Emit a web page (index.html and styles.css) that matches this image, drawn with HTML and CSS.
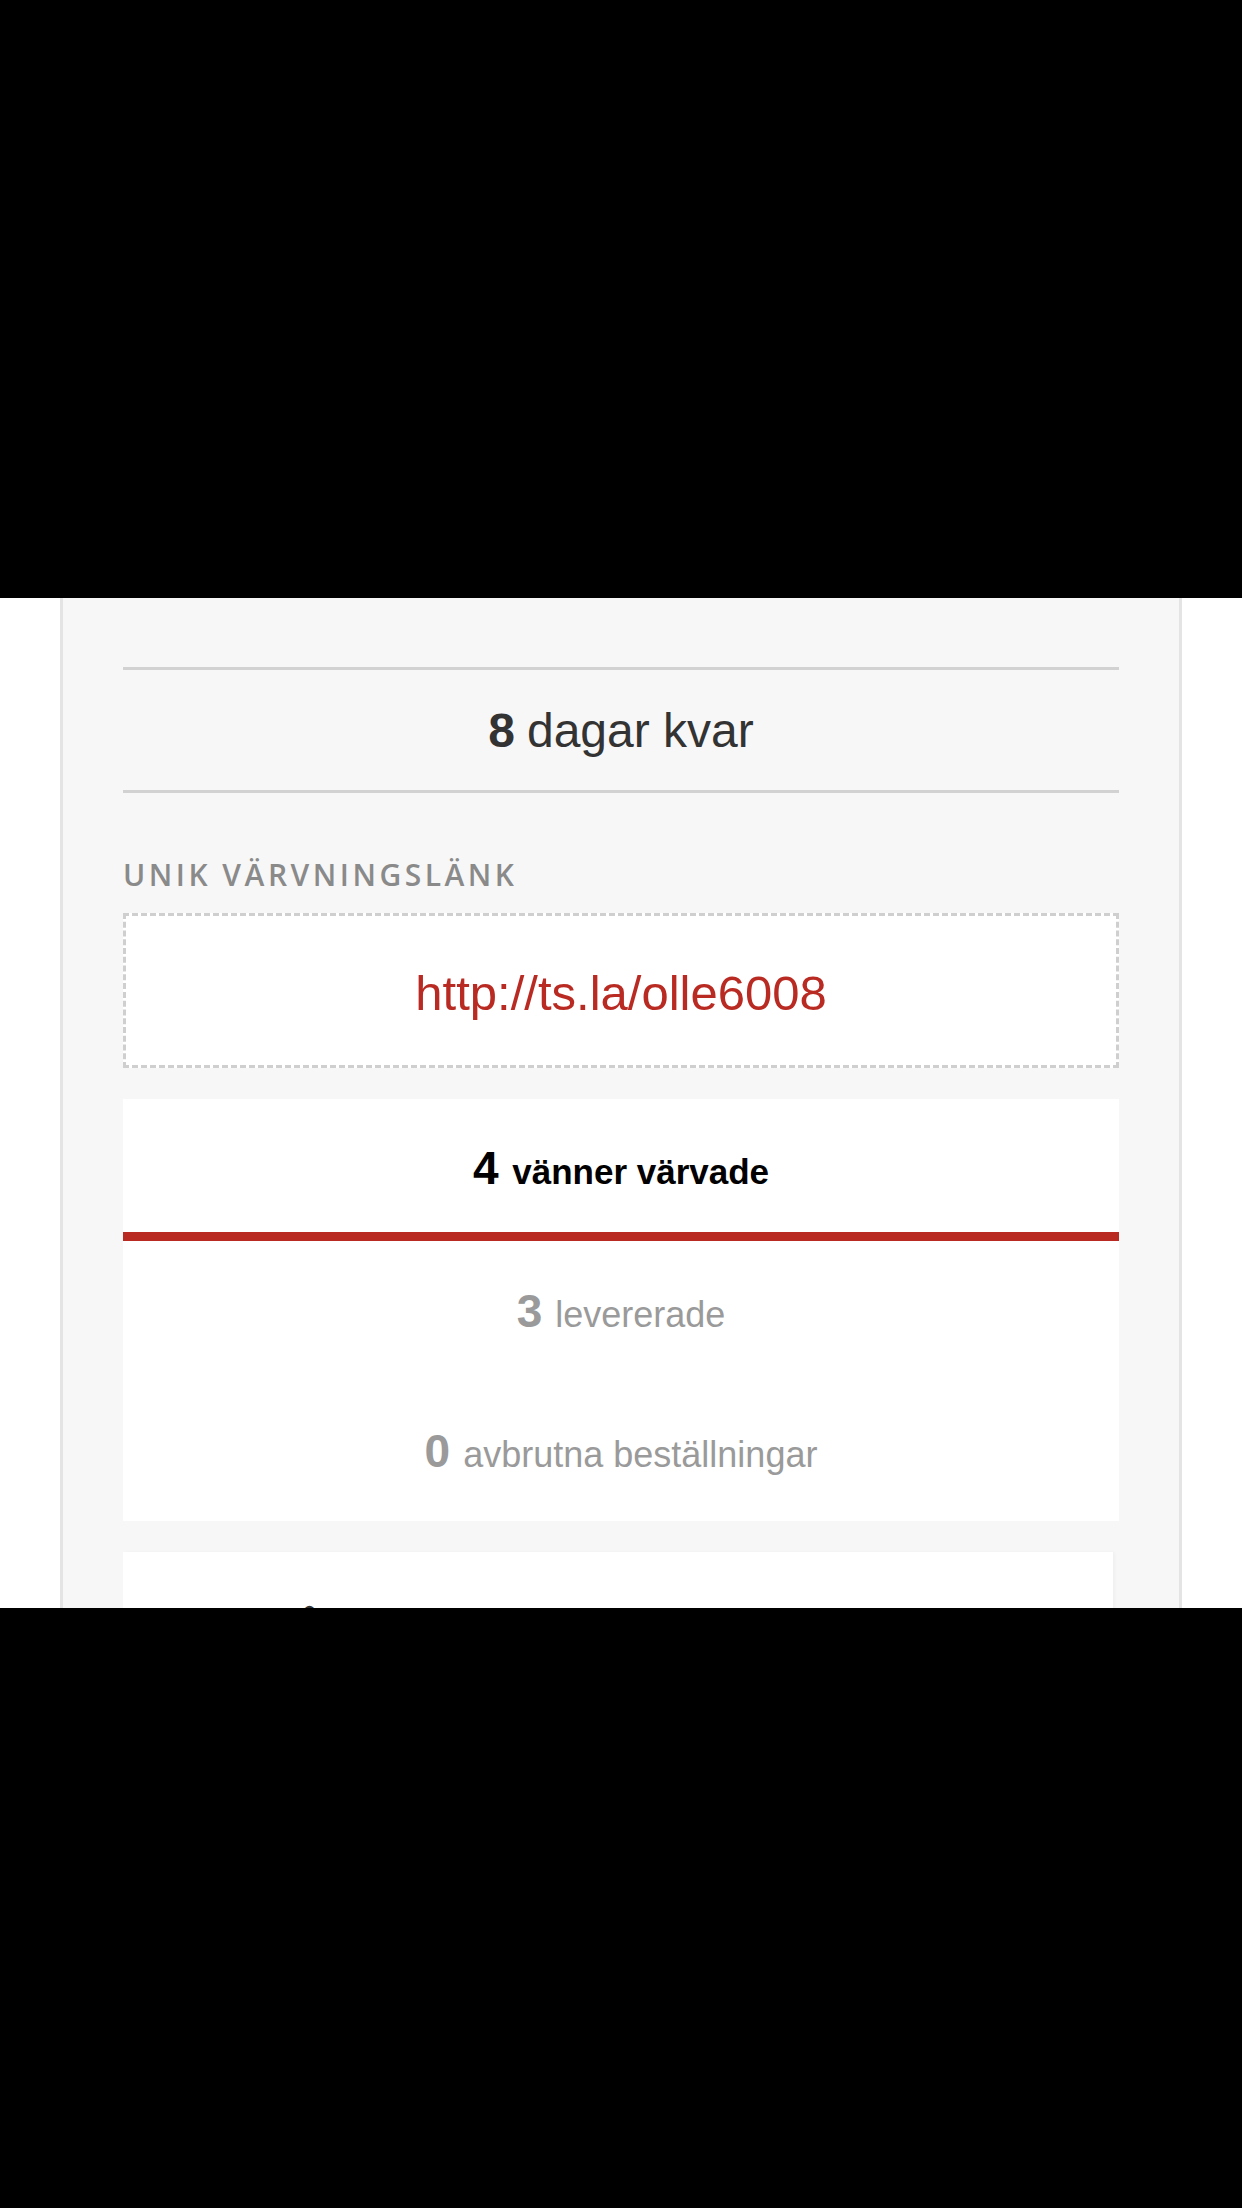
FILE: index.html
```html
<!DOCTYPE html>
<html lang="sv">
<head>
<meta charset="UTF-8" />
<meta name="viewport" content="width=device-width, initial-scale=1" />
<title>Värva vänner</title>
<link rel="stylesheet" href="styles.css">
</head>
<body>
<div class="letterbox"></div>

<div class="screen">
  <div class="panel">
    <div class="days-left">
      <strong>8</strong> dagar kvar
    </div>

    <h2 class="section-label">UNIK VÄRVNINGSLÄNK</h2>
    <div class="link-box">
      <a href="#">http://ts.la/olle6008</a>
    </div>

    <ul class="stats">
      <li class="stat stat-main"><span class="num">4</span> vänner värvade</li>
      <li class="stat"><span class="num">3</span> levererade</li>
      <li class="stat"><span class="num">0</span> avbrutna beställningar</li>
    </ul>

    <div class="info-card">
      <h3>Hur går det till?</h3>
    </div>
  </div>
</div>

<div class="letterbox letterbox-bottom"></div>
</body>
</html>
```

FILE: styles.css
```css
body {
  margin: 0;
  background: white;
  font-family: "Liberation Sans", Arial, sans-serif;
  color: #333;
}

/* black bars above and below the screenshot area */
.letterbox {
  height: 598px;
  background: #000;
}
.letterbox-bottom {
  height: 600px;
}

.screen {
  height: 1010px;
  overflow: hidden;
}

.panel {
  margin: 0 60px;
  height: 100%;
  box-sizing: border-box;
  padding: 69px 60px 0 60px;
  background: #f7f7f7;
  border-left: 3px solid #e4e4e4;
  border-right: 3px solid #e4e4e4;
}

.days-left {
  height: 120px;
  border-top: 3px solid #d2d2d2;
  border-bottom: 3px solid #d2d2d2;
  display: flex;
  align-items: center;
  justify-content: center;
  font-size: 48px;
  color: #333;
}
.days-left strong {
  margin-right: 12px;
}

.section-label {
  margin: 67px 0 0 0;
  font-family: "Open Sans", sans-serif;
  font-weight: 600;
  font-size: 30px;
  line-height: 30px;
  letter-spacing: 3.5px;
  color: #8a8a8a;
}

.link-box {
  margin-top: 23px;
  height: 155px;
  box-sizing: border-box;
  border: 3px dashed #cfcfcf;
  background: white;
  display: flex;
  align-items: center;
  justify-content: center;
}
.link-box a {
  color: #b92b22;
  text-decoration: none;
  font-size: 49px;
  margin-top: 4px;
}

.stats {
  list-style: none;
  margin: 31px 0 0 0;
  padding: 0;
  background: white;
}
.stat {
  height: 140px;
  line-height: 140px;
  text-align: center;
  font-size: 36px;
  color: #9a9a9a;
}
.stat .num {
  font-size: 46px;
  font-weight: bold;
  margin-right: 3px;
}
.stat-main {
  height: 133px;
  line-height: 138px;
  border-bottom: 9px solid #b92b22;
  font-size: 35px;
  color: #000;
  font-weight: bold;
}
.stat-main .num {
  margin-right: 4px;
}

.info-card {
  margin: 31px 6px 0 0;
  background: white;
  padding: 50px 67px 40px 67px;
  box-shadow: 2px 0 3px rgba(0,0,0,0.03);
}
.info-card h3 {
  margin: 0;
  font-size: 44px;
  font-weight: normal;
  color: #333;
}
```
